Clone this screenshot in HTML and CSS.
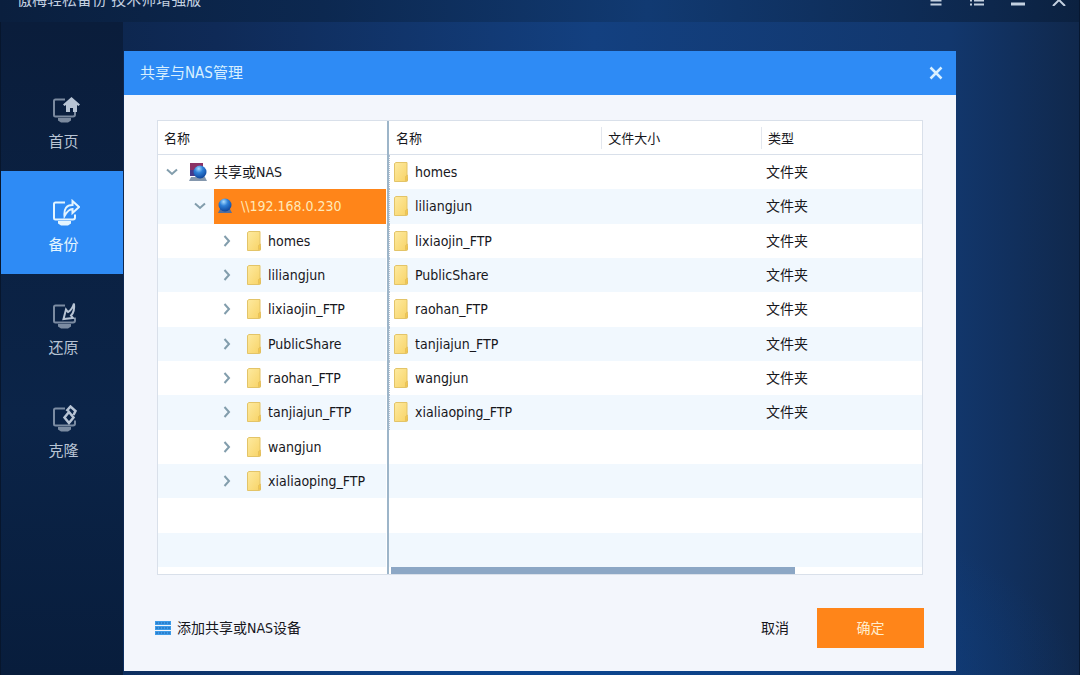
FILE: index.html
```html
<!DOCTYPE html>
<html lang="zh-CN">
<head>
<meta charset="utf-8">
<title>共享与NAS管理</title>
<link rel="stylesheet" href="styles.css">
</head>
<body>
<svg class="defs" aria-hidden="true">
  <defs>
    <linearGradient id="gold" x1="0" y1="0" x2="1" y2="1"><stop offset="0" stop-color="#fdeaa0"/><stop offset="1" stop-color="#f8d366"/></linearGradient>
    <radialGradient id="ball" cx=".4" cy=".25" r=".8"><stop offset="0" stop-color="#a8dcff"/><stop offset=".4" stop-color="#2e80d8"/><stop offset="1" stop-color="#0c3f94"/></radialGradient>
    <symbol id="folder" viewBox="0 0 14 20"><path d="M.5 1.500 2 .5h11v14l.6 1v3.500l-1.600.5H.5z" fill="url(#gold)" stroke="#e3c468"/><path d="M11.500 18.500v-4l2-1.500v5z" fill="#f3c94e" stroke="#dfb95a" stroke-width=".6"/></symbol>
    <symbol id="right" viewBox="0 0 8 12"><path d="m1.500 1 4.500 5-4.500 5" fill="none" stroke="#829dac" stroke-width="2"/></symbol>
    <symbol id="down" viewBox="0 0 12 8"><path d="m1 1.500 5 4.500 5-4.500" fill="none" stroke="#829dac" stroke-width="2"/></symbol>
    <symbol id="monitor" viewBox="0 0 28 28"><path d="M13 3.500H3.500Q2 3.500 2 5v14q0 1.500 1.500 1.500H21q2 0 2-2v-3" fill="none" stroke="currentColor" stroke-width="2"/><path d="M6 22h13v2.500l-3 2H9l-3-2z" fill="currentColor"/></symbol>
  </defs>
</svg>
<div class="app">
  <header class="titlebar">
    <span class="app-name">傲梅轻松备份 技术师增强版</span>
    <div class="window-tools">
      <button aria-label="菜单"><svg viewBox="0 0 14 14"><path d="M1.500 4h11M1.500 8.500h11M1.500 12.500h11" stroke="currentColor" stroke-width="2"/></svg></button>
      <button aria-label="列表"><svg viewBox="0 0 14 14"><path d="M0 4h2m2 0h10M0 8.500h2m2 0h10M0 12.500h2m2 0h10" stroke="currentColor" stroke-width="2"/></svg></button>
      <button aria-label="最小化"><svg viewBox="0 0 14 14"><path d="M0 12h14" stroke="currentColor" stroke-width="3"/></svg></button>
      <button aria-label="关闭程序"><svg viewBox="0 0 14 14"><path d="m1 2 12 12M13 2 1 14" stroke="currentColor" stroke-width="2"/></svg></button>
    </div>
  </header>
  <nav class="sidebar">
    <button class="nav-item"><svg viewBox="0 0 28 28"><use href="#monitor" opacity=".65"/><path d="m11 8.500 8.500-7.500L28 8.500 26.500 10 25 9v7h-4v-4h-3v4h-4V9l-1.500 1z" fill="currentColor"/></svg>首页</button>
    <button class="nav-item active"><svg viewBox="0 0 28 28"><use href="#monitor"/><path d="M12.500 17q-1-11 8-11V2l6.500 6-6.500 6v-4q-4 0-8 7z" fill="none" stroke="currentColor" stroke-width="2"/></svg>备份</button>
    <button class="nav-item"><svg viewBox="0 0 28 28"><use href="#monitor" opacity=".65"/><path d="M22 1.500q1 8-3 12l2 2.500-9.500 1L14 7.500l2 2.500q4-2 6-8.500z" fill="none" stroke="currentColor" stroke-width="2"/></svg>还原</button>
    <button class="nav-item"><svg viewBox="0 0 28 28"><use href="#monitor" opacity=".65"/><path d="m17 7 4.500 5.500L17 18l-4.500-5.500zM14.500 6l4-4.500L23.500 6l-2 4" fill="none" stroke="currentColor" stroke-width="2.500"/></svg>克隆</button>
  </nav>
  <main class="workspace">
    <section class="dialog" role="dialog" aria-labelledby="dialog-title">
      <header class="dialog-head">
        <h1 id="dialog-title">共享与NAS管理</h1>
        <button class="close" aria-label="关闭"><svg viewBox="0 0 14 14"><path d="m1.500 1.500 11 11m0-11-11 11" stroke="currentColor" stroke-width="2.500"/></svg></button>
      </header>
      <div class="browser">
        <div class="pane tree-pane">
          <div class="pane-title">名称</div>
          <ul class="tree">
            <li class="root"><svg class="down"><use href="#down"/></svg><svg class="net" viewBox="0 0 18 18"><path d="M1 0h13v13H1z" fill="#8c3264"/><path d="M1 7h6v6H1z" fill="#453a8c"/><path d="M2 14h14l2 4H0z" fill="#8497ad"/><circle cx="11" cy="9" r="6.500" fill="url(#ball)"/></svg><span>共享或NAS</span></li>
            <li class="host"><svg class="down"><use href="#down"/></svg><div class="selected"><svg class="globe" viewBox="0 0 14 16"><path d="M2 11h10l2 4H0z" fill="#536f9e"/><circle cx="7" cy="7" r="6.500" fill="url(#ball)"/></svg><span>\\192.168.0.230</span></div></li>
            <li class="share"><svg class="right"><use href="#right"/></svg><svg class="folder"><use href="#folder"/></svg><span>homes</span></li>
            <li class="share"><svg class="right"><use href="#right"/></svg><svg class="folder"><use href="#folder"/></svg><span>liliangjun</span></li>
            <li class="share"><svg class="right"><use href="#right"/></svg><svg class="folder"><use href="#folder"/></svg><span>lixiaojin_FTP</span></li>
            <li class="share"><svg class="right"><use href="#right"/></svg><svg class="folder"><use href="#folder"/></svg><span>PublicShare</span></li>
            <li class="share"><svg class="right"><use href="#right"/></svg><svg class="folder"><use href="#folder"/></svg><span>raohan_FTP</span></li>
            <li class="share"><svg class="right"><use href="#right"/></svg><svg class="folder"><use href="#folder"/></svg><span>tanjiajun_FTP</span></li>
            <li class="share"><svg class="right"><use href="#right"/></svg><svg class="folder"><use href="#folder"/></svg><span>wangjun</span></li>
            <li class="share"><svg class="right"><use href="#right"/></svg><svg class="folder"><use href="#folder"/></svg><span>xialiaoping_FTP</span></li>
            <li></li>
            <li></li>
          </ul>
        </div>
        <div class="pane list-pane">
          <table class="files">
            <colgroup><col class="col-name"><col class="col-size"><col></colgroup>
            <thead><tr><th scope="col">名称</th><th scope="col">文件大小</th><th scope="col">类型</th></tr></thead>
            <tbody>
              <tr><td><div class="file"><svg class="folder"><use href="#folder"/></svg>homes</div></td><td></td><td>文件夹</td></tr>
              <tr><td><div class="file"><svg class="folder"><use href="#folder"/></svg>liliangjun</div></td><td></td><td>文件夹</td></tr>
              <tr><td><div class="file"><svg class="folder"><use href="#folder"/></svg>lixiaojin_FTP</div></td><td></td><td>文件夹</td></tr>
              <tr><td><div class="file"><svg class="folder"><use href="#folder"/></svg>PublicShare</div></td><td></td><td>文件夹</td></tr>
              <tr><td><div class="file"><svg class="folder"><use href="#folder"/></svg>raohan_FTP</div></td><td></td><td>文件夹</td></tr>
              <tr><td><div class="file"><svg class="folder"><use href="#folder"/></svg>tanjiajun_FTP</div></td><td></td><td>文件夹</td></tr>
              <tr><td><div class="file"><svg class="folder"><use href="#folder"/></svg>wangjun</div></td><td></td><td>文件夹</td></tr>
              <tr><td><div class="file"><svg class="folder"><use href="#folder"/></svg>xialiaoping_FTP</div></td><td></td><td>文件夹</td></tr>
              <tr class="blank"><td></td><td></td><td></td></tr>
              <tr class="blank"><td></td><td></td><td></td></tr>
              <tr class="blank"><td></td><td></td><td></td></tr>
              <tr class="blank"><td></td><td></td><td></td></tr>
            </tbody>
          </table>
          <div class="scrollbar"><div class="thumb"></div></div>
        </div>
      </div>
      <footer class="actions">
        <button class="add"><svg viewBox="0 0 16 14"><path d="M0 0h16v4H0zm0 5h16v4H0zm0 5h16v4H0z" fill="#3c9be8"/><path d="M1 2h14M1 7h14M1 12h14" stroke="#1c65b4" stroke-dasharray="2 1"/></svg>添加共享或NAS设备</button>
        <button class="cancel">取消</button>
        <button class="confirm">确定</button>
      </footer>
    </section>
  </main>
</div>
</body>
</html>
```
FILE: styles.css
```css
* { box-sizing: border-box; }

body {
  margin: 0;
  font: 14px/20px "DejaVu Sans Condensed", "Noto Sans CJK SC", sans-serif;
  color: #17171c;
}

button {
  padding: 0;
  border: 0;
  background: none;
  color: inherit;
  font: inherit;
  cursor: pointer;
}

svg { display: block; flex: none; }
.defs { position: absolute; width: 0; height: 0; }

.app {
  display: grid;
  grid-template: 22px 1fr / 123px 1fr;
  height: 100vh;
  min-height: 600px;
  overflow: hidden;
  border-right: 1px solid #07172f;
  background:
    radial-gradient(ellipse 50% 30% at 50% 100%, #0b458f, transparent),
    linear-gradient(90deg, #0b2346, #0f2a57 20%, #134080 55%, #12376d 88%, #10284c);
}

.titlebar {
  grid-column: 1 / -1;
  display: flex;
  justify-content: space-between;
  align-items: flex-start;
  overflow: hidden;
  padding: 0 13px 0 17px;
  color: #c3d0e0;
  background: linear-gradient(90deg, #0a1f3e, #0c2850 30%, #113a72 60%, #0d274c 92%, #0b2140);
}

.app-name { margin-top: -10px; font-size: 15px; }
.window-tools { display: flex; gap: 27px; margin-top: -8px; }
.window-tools svg { width: 14px; height: 14px; }

.sidebar {
  padding-top: 46px;
  border-left: 1px solid #07162d;
  background: linear-gradient(#0a1d3b, #0b2448 60%, #081d3c);
}

.nav-item {
  display: flex;
  flex-direction: column;
  align-items: center;
  gap: 8px;
  width: 100%;
  height: 103px;
  padding: 28px 0 0 3px;
  color: #b8c4d4;
  font-size: 15px;
}

.nav-item svg { width: 28px; height: 28px; margin-left: 4px; }
.nav-item.active { background: #2e8bf5; color: #e4f5ff; }

.workspace { display: flex; padding: 29px 123px 4px 1px; }

.dialog {
  display: flex;
  flex-direction: column;
  flex: 1;
  min-width: 0;
  background: #f3f6fc;
}

.dialog-head {
  display: flex;
  justify-content: space-between;
  align-items: center;
  height: 44px;
  padding: 0 13px 0 16px;
  background: #2e8bf5;
  color: #d9f0ff;
}

.dialog-head h1 { margin: 0; font-size: 15px; font-weight: 400; }
.dialog-head svg { width: 14px; height: 14px; }

.browser {
  display: flex;
  flex: 1;
  min-height: 0;
  margin: 25px 33px 0;
  border: 1px solid #d9e0ea;
  background: #fff;
}

.pane { display: flex; flex-direction: column; }
.tree-pane { width: 231px; border-right: 2px solid #9db5c9; }
.list-pane { flex: 1; min-width: 0; }

.pane-title {
  height: 34px;
  padding: 8px 6px 0;
  border-bottom: 1px solid #d9e0ea;
  font-size: 13px;
}

.tree {
  display: grid;
  grid-auto-rows: 1fr;
  flex: 1;
  margin: 0 1px 7px 0;
  padding: 0;
  list-style: none;
}

.tree li { display: flex; align-items: center; }
.tree li:nth-child(even),
.files tbody tr:nth-child(even) { background: #f1f8fe; }

.root { padding-left: 8px; }
.host { padding-left: 36px; }
.share { padding-left: 65px; }
.down { width: 12px; height: 8px; }
.right { width: 8px; height: 12px; }
.folder { width: 14px; height: 20px; }
.net { width: 18px; height: 18px; margin: 0 7px 0 11px; }
.share .folder { margin: 0 7px 0 16px; }

.selected {
  display: flex;
  align-items: center;
  align-self: stretch;
  flex: 1;
  gap: 9px;
  margin-left: 8px;
  padding-left: 4px;
  background: #ff8519;
  color: #ffe9b8;
}

.globe { width: 14px; height: 16px; }

.files {
  flex: 1;
  width: 100%;
  table-layout: fixed;
  border-collapse: separate;
  border-spacing: 0;
}

.col-name { width: 40%; }
.col-size { width: 30%; }

.files th {
  height: 34px;
  padding: 2px 6px 0;
  border-bottom: 1px solid #d9e0ea;
  background: linear-gradient(#e3e7ee, #e3e7ee) right 6px / 1px 22px no-repeat;
  font-size: 13px;
  font-weight: 400;
  text-align: left;
}

.files th:first-child { padding-left: 7px; }
.files th:last-child { background: none; }
.files td { height: 34px; padding: 0 4px; }
.files td:first-child { border-left: 1px dotted #b4c2d2; }
.files .blank td { border-left: 0; }
.file { display: flex; align-items: center; gap: 7px; }

.scrollbar { height: 7px; padding-left: 2px; }
.thumb { width: 76%; height: 100%; background: #8ca7c5; }

.actions {
  display: flex;
  align-items: center;
  padding: 33px 32px 23px 31px;
}

.add { display: flex; align-items: center; gap: 6px; margin-right: auto; }
.add svg { width: 16px; height: 14px; }
.cancel { width: 84px; height: 40px; }

.confirm {
  width: 107px;
  height: 40px;
  background: #ff8519;
  color: #ffedcd;
}
```
